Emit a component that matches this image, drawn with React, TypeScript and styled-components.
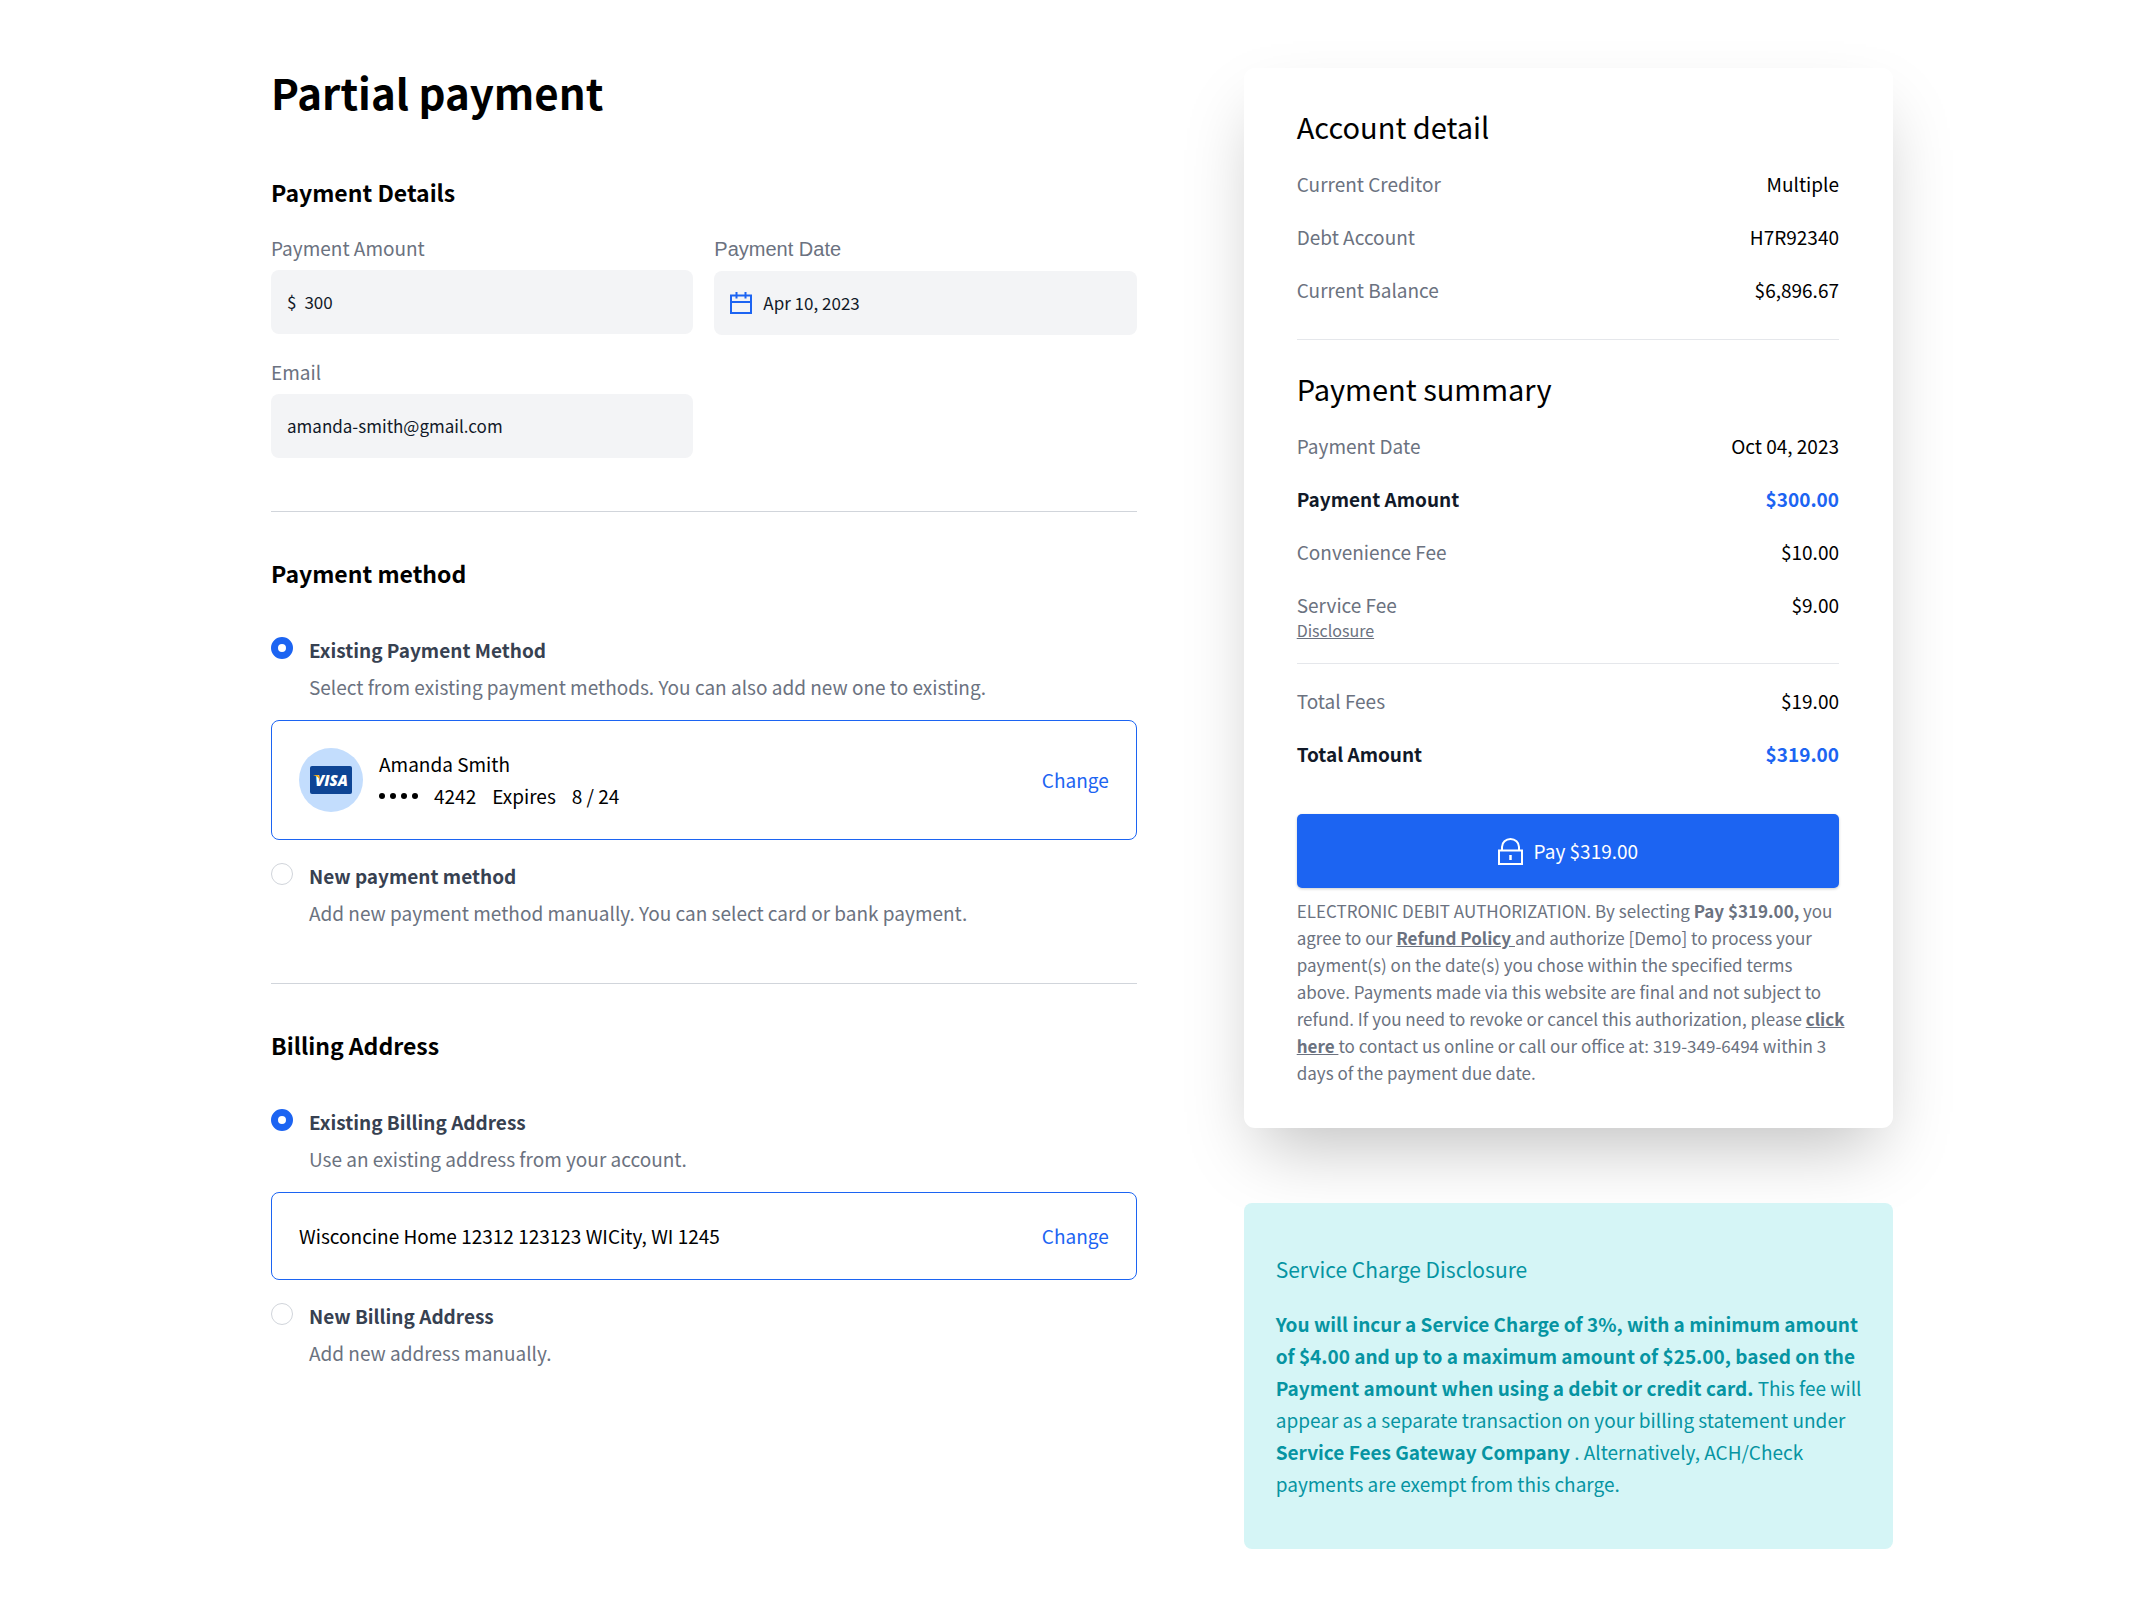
import React, { useState } from "react";
import styled, { createGlobalStyle } from "styled-components";

const color = {
  blue: "#1c64f2",
  ink: "#000000",
  dark: "#111928",
  slate: "#374151",
  muted: "#6b7280",
  line: "#e5e7eb",
  field: "#f3f4f6",
  teal: "#0694a2",
  tealSoft: "#d5f5f6",
};

const GlobalStyle = createGlobalStyle`
  *, *::before, *::after { box-sizing: border-box; }
  body {
    margin: 0;
    background: #ffffff;
    color: ${color.ink};
    font-family: "Noto Sans CJK SC", "Noto Sans", sans-serif;
    font-size: 19px;
    line-height: 32px;
  }
  h1, h2, h3, p, dl, dd, dt, fieldset { margin: 0; padding: 0; border: 0; }
  input, button { font: inherit; color: inherit; }
`;

const Page = styled.div`
  padding: 68px 8px 60px 16px;
`;

const Columns = styled.main`
  display: grid;
  grid-template-columns: minmax(0, 4fr) minmax(0, 3fr);
  gap: 107px;
  align-items: start;
  max-width: 1622px;
  margin: 0 auto;

  @media (max-width: 1100px) {
    grid-template-columns: minmax(0, 1fr);
    gap: 60px;
  }
`;

const PageTitle = styled.h1`
  margin-bottom: 60px;
  font-size: 42px;
  line-height: 48px;
  font-weight: 600;
`;

const SectionTitle = styled.h2<{ $gap: number }>`
  margin-bottom: ${(p) => p.$gap}px;
  font-size: 23px;
  line-height: 32px;
  font-weight: 600;
`;

const Divider = styled.hr<{ $above: number; $below: number }>`
  height: 1px;
  margin: ${(p) => p.$above}px 0 ${(p) => p.$below}px;
  border: 0;
  background: ${color.line};
`;

const SectionDivider = styled(Divider)`
  background: #d1d5db;
`;

const FieldGrid = styled.div`
  display: grid;
  grid-template-columns: repeat(2, minmax(0, 1fr));
  gap: 21px;
`;

const Field = styled.div`
  display: flex;
  flex-direction: column;
  gap: 6px;
  color: ${color.muted};
`;

const PickerLabel = styled.label`
  padding-top: 1px;
  font-family: "Liberation Sans", Arial, sans-serif;
  font-size: 20px;
`;

const InputShell = styled.div<{ $gap?: number }>`
  display: flex;
  align-items: center;
  gap: ${(p) => p.$gap ?? 8}px;
  height: 64px;
  padding: 0 16px;
  border-radius: 8px;
  background: ${color.field};
  color: ${color.dark};
  font-size: 17px;
`;

const TextInput = styled.input`
  flex: 1;
  min-width: 0;
  padding: 0;
  border: 0;
  outline: 0;
  background: transparent;
`;

const Options = styled.fieldset`
  min-width: 0;
`;

const Option = styled.div`
  display: grid;
  grid-template-columns: 22px 1fr;
  gap: 5px 16px;
`;

const Radio = styled.input`
  appearance: none;
  width: 22px;
  height: 22px;
  margin: 3px 0 0;
  border: 1px solid #d1d5db;
  border-radius: 50%;
  background: #ffffff;

  &:checked {
    border: 7px solid ${color.blue};
  }
`;

const OptionLabel = styled.label`
  color: ${color.slate};
  font-weight: 600;
`;

const OptionNote = styled.p`
  grid-column: 2;
  color: ${color.muted};
`;

const ChoiceCard = styled.div`
  display: flex;
  align-items: center;
  justify-content: space-between;
  gap: 16px;
  margin: 17px 0 20px;
  padding: 27px;
  border: 1px solid ${color.blue};
  border-radius: 8px;
`;

const CardInfo = styled.div`
  display: flex;
  align-items: center;
  gap: 16px;
`;

const BrandBadge = styled.span`
  display: flex;
  align-items: center;
  justify-content: center;
  width: 64px;
  height: 64px;
  border-radius: 50%;
  background: #c3ddfd;
`;

const CardNumber = styled.div`
  display: flex;
  align-items: center;
  gap: 16px;
`;

const Dots = styled.span`
  display: flex;
  gap: 5px;

  i {
    width: 6px;
    height: 6px;
    border-radius: 50%;
    background: ${color.ink};
  }
`;

const TextButton = styled.button`
  padding: 0;
  border: 0;
  background: none;
  color: ${color.blue};
  cursor: pointer;
`;

const SummaryCard = styled.section`
  padding: 40px 54px 42px 53px;
  border-radius: 11px;
  background: #ffffff;
  box-shadow: 0 33px 67px -16px rgba(0, 0, 0, 0.25);
`;

const CardTitle = styled.h2`
  margin-bottom: 24px;
  font-size: 29px;
  line-height: 36px;
  font-weight: 400;
`;

const Rows = styled.dl`
  display: flex;
  flex-direction: column;
  gap: 21px;
`;

const Row = styled.div<{ $strong?: boolean }>`
  display: flex;
  justify-content: space-between;
  font-weight: ${(p) => (p.$strong ? 600 : 400)};

  dt { color: ${(p) => (p.$strong ? color.dark : color.muted)}; }
  dd { color: ${(p) => (p.$strong ? color.blue : color.ink)}; }
`;

const DisclosureLink = styled.a`
  display: block;
  font-size: 16px;
  line-height: 18px;
  color: inherit;
`;

const PayButton = styled.button`
  display: flex;
  align-items: center;
  justify-content: center;
  gap: 11px;
  width: 100%;
  height: 74px;
  margin: 44px 0 9px;
  border: 0;
  border-radius: 5px;
  background: ${color.blue};
  color: #ffffff;
  box-shadow: 0 1px 3px rgba(0, 0, 0, 0.2);
  cursor: pointer;
`;

const Legal = styled.p`
  margin-right: -12px;
  font-size: 17px;
  line-height: 27px;
  color: ${color.muted};

  b, a { font-weight: 600; color: inherit; }
`;

const Notice = styled.section`
  margin-top: 75px;
  padding: 50px 26px 49px 32px;
  border-radius: 8px;
  background: ${color.tealSoft};
  color: ${color.teal};

  b { font-weight: 600; }
`;

const NoticeTitle = styled.h3`
  margin-bottom: 23px;
  font-size: 21px;
  line-height: 32px;
  font-weight: 400;
`;

const CalendarIcon = () => (
  <svg width="22" height="22" viewBox="0 0 22 22" fill="none" stroke={color.blue} strokeWidth="2" aria-hidden="true">
    <path d="M1 3.500h20V21H1zM1 10h20M6.500 0v6.500M15.500 0v6.500" />
  </svg>
);

const LockIcon = () => (
  <svg width="25" height="27" viewBox="0 0 25 27" fill="none" stroke="#ffffff" strokeWidth="2" aria-hidden="true">
    <path d="M1 12.500h23V26H1zM4 12.500V9a8.500 8 0 0 1 17 0v3.500" />
    <path d="M12.500 17v5" strokeWidth="2.500" />
  </svg>
);

const VisaLogo = () => (
  <svg width="42" height="28" viewBox="0 0 42 28" role="img" aria-label="Visa">
    <rect width="42" height="28" rx="2" fill="#0e4595" />
    <text x="5" y="20" fill="#ffffff" fontFamily="Open Sans, sans-serif" fontWeight="800" fontStyle="italic" fontSize="15">
      VISA
    </text>
    <path d="M3.500 9h4.500q1 .2 1.300 1.200l1 4.500Q8.500 10.500 3.500 9.300z" fill="#f2ae14" />
  </svg>
);

type SummaryRow = { label: string; value: string; strong?: boolean; disclosure?: boolean };

const accountRows: SummaryRow[] = [
  { label: "Current Creditor", value: "Multiple" },
  { label: "Debt Account", value: "H7R92340" },
  { label: "Current Balance", value: "$6,896.67" },
];

const paymentRows: SummaryRow[] = [
  { label: "Payment Date", value: "Oct 04, 2023" },
  { label: "Payment Amount", value: "$300.00", strong: true },
  { label: "Convenience Fee", value: "$10.00" },
  { label: "Service Fee", value: "$9.00", disclosure: true },
];

const totalRows: SummaryRow[] = [
  { label: "Total Fees", value: "$19.00" },
  { label: "Total Amount", value: "$319.00", strong: true },
];

const SummaryRows = ({ rows }: { rows: SummaryRow[] }) => (
  <Rows>
    {rows.map((row) => (
      <Row key={row.label} $strong={row.strong}>
        <dt>
          {row.label}
          {row.disclosure && <DisclosureLink href="#disclosure">Disclosure</DisclosureLink>}
        </dt>
        <dd>{row.value}</dd>
      </Row>
    ))}
  </Rows>
);

type RadioOptionProps = {
  id: string;
  group: string;
  title: string;
  note: string;
  checked: boolean;
  onSelect: () => void;
};

const RadioOption = ({ id, group, title, note, checked, onSelect }: RadioOptionProps) => (
  <Option>
    <Radio type="radio" id={id} name={group} checked={checked} onChange={onSelect} />
    <OptionLabel htmlFor={id}>{title}</OptionLabel>
    <OptionNote>{note}</OptionNote>
  </Option>
);

export default function App() {
  const [amount, setAmount] = useState("300");
  const [date, setDate] = useState("Apr 10, 2023");
  const [email, setEmail] = useState("amanda-smith@gmail.com");
  const [method, setMethod] = useState("existing");
  const [address, setAddress] = useState("existing");

  return (
    <Page>
      <GlobalStyle />
      <Columns>
        <form id="payment" onSubmit={(e) => e.preventDefault()}>
          <PageTitle>Partial payment</PageTitle>

          <SectionTitle $gap={24}>Payment Details</SectionTitle>
          <FieldGrid>
            <Field>
              <label htmlFor="amount">Payment Amount</label>
              <InputShell>
                <span>$</span>
                <TextInput id="amount" value={amount} onChange={(e) => setAmount(e.target.value)} />
              </InputShell>
            </Field>
            <Field>
              <PickerLabel htmlFor="date">Payment Date</PickerLabel>
              <InputShell $gap={11}>
                <CalendarIcon />
                <TextInput id="date" value={date} onChange={(e) => setDate(e.target.value)} />
              </InputShell>
            </Field>
            <Field>
              <label htmlFor="email">Email</label>
              <InputShell>
                <TextInput id="email" value={email} onChange={(e) => setEmail(e.target.value)} />
              </InputShell>
            </Field>
          </FieldGrid>

          <SectionDivider $above={53} $below={45} />

          <SectionTitle $gap={45}>Payment method</SectionTitle>
          <Options aria-label="Payment method">
            <RadioOption
              id="method-existing"
              group="method"
              title="Existing Payment Method"
              note="Select from existing payment methods. You can also add new one to existing."
              checked={method === "existing"}
              onSelect={() => setMethod("existing")}
            />
            <ChoiceCard>
              <CardInfo>
                <BrandBadge>
                  <VisaLogo />
                </BrandBadge>
                <div>
                  <div>Amanda Smith</div>
                  <CardNumber>
                    <Dots aria-hidden="true">
                      <i />
                      <i />
                      <i />
                      <i />
                    </Dots>
                    <span>4242</span>
                    <span>Expires</span>
                    <span>8 / 24</span>
                  </CardNumber>
                </div>
              </CardInfo>
              <TextButton type="button">Change</TextButton>
            </ChoiceCard>
            <RadioOption
              id="method-new"
              group="method"
              title="New payment method"
              note="Add new payment method manually. You can select card or bank payment."
              checked={method === "new"}
              onSelect={() => setMethod("new")}
            />
          </Options>

          <SectionDivider $above={54} $below={45} />

          <SectionTitle $gap={45}>Billing Address</SectionTitle>
          <Options aria-label="Billing address">
            <RadioOption
              id="address-existing"
              group="address"
              title="Existing Billing Address"
              note="Use an existing address from your account."
              checked={address === "existing"}
              onSelect={() => setAddress("existing")}
            />
            <ChoiceCard>
              <span>Wisconcine Home 12312 123123 WICity, WI 1245</span>
              <TextButton type="button">Change</TextButton>
            </ChoiceCard>
            <RadioOption
              id="address-new"
              group="address"
              title="New Billing Address"
              note="Add new address manually."
              checked={address === "new"}
              onSelect={() => setAddress("new")}
            />
          </Options>
        </form>

        <aside>
          <SummaryCard>
            <CardTitle>Account detail</CardTitle>
            <SummaryRows rows={accountRows} />
            <Divider $above={33} $below={30} />
            <CardTitle>Payment summary</CardTitle>
            <SummaryRows rows={paymentRows} />
            <Divider $above={24} $below={21} />
            <SummaryRows rows={totalRows} />
            <PayButton type="submit" form="payment">
              <LockIcon />
              Pay $319.00
            </PayButton>
            <Legal>
              ELECTRONIC DEBIT AUTHORIZATION. By selecting <b>Pay $319.00,</b> you agree to our{" "}
              <a href="#refund">Refund Policy </a>and authorize [Demo] to process your payment(s) on the date(s) you
              chose within the specified terms
              <br />
              above. Payments made via this website are final and not subject to refund. If you need to revoke or
              cancel this authorization, please <a href="#contact">click here </a>to contact us online or call our
              office at: 319-349-6494 within 3 days of the payment due date.
            </Legal>
          </SummaryCard>

          <Notice id="disclosure">
            <NoticeTitle>Service Charge Disclosure</NoticeTitle>
            <p>
              <b>
                You will incur a Service Charge of 3%, with a minimum amount of $4.00 and up to a maximum amount of
                $25.00, based on the Payment amount when using a debit or credit card.
              </b>{" "}
              This fee will appear as a separate transaction on your billing statement under{" "}
              <b>Service Fees Gateway Company</b> . Alternatively, ACH/Check payments are exempt from this charge.
            </p>
          </Notice>
        </aside>
      </Columns>
    </Page>
  );
}
